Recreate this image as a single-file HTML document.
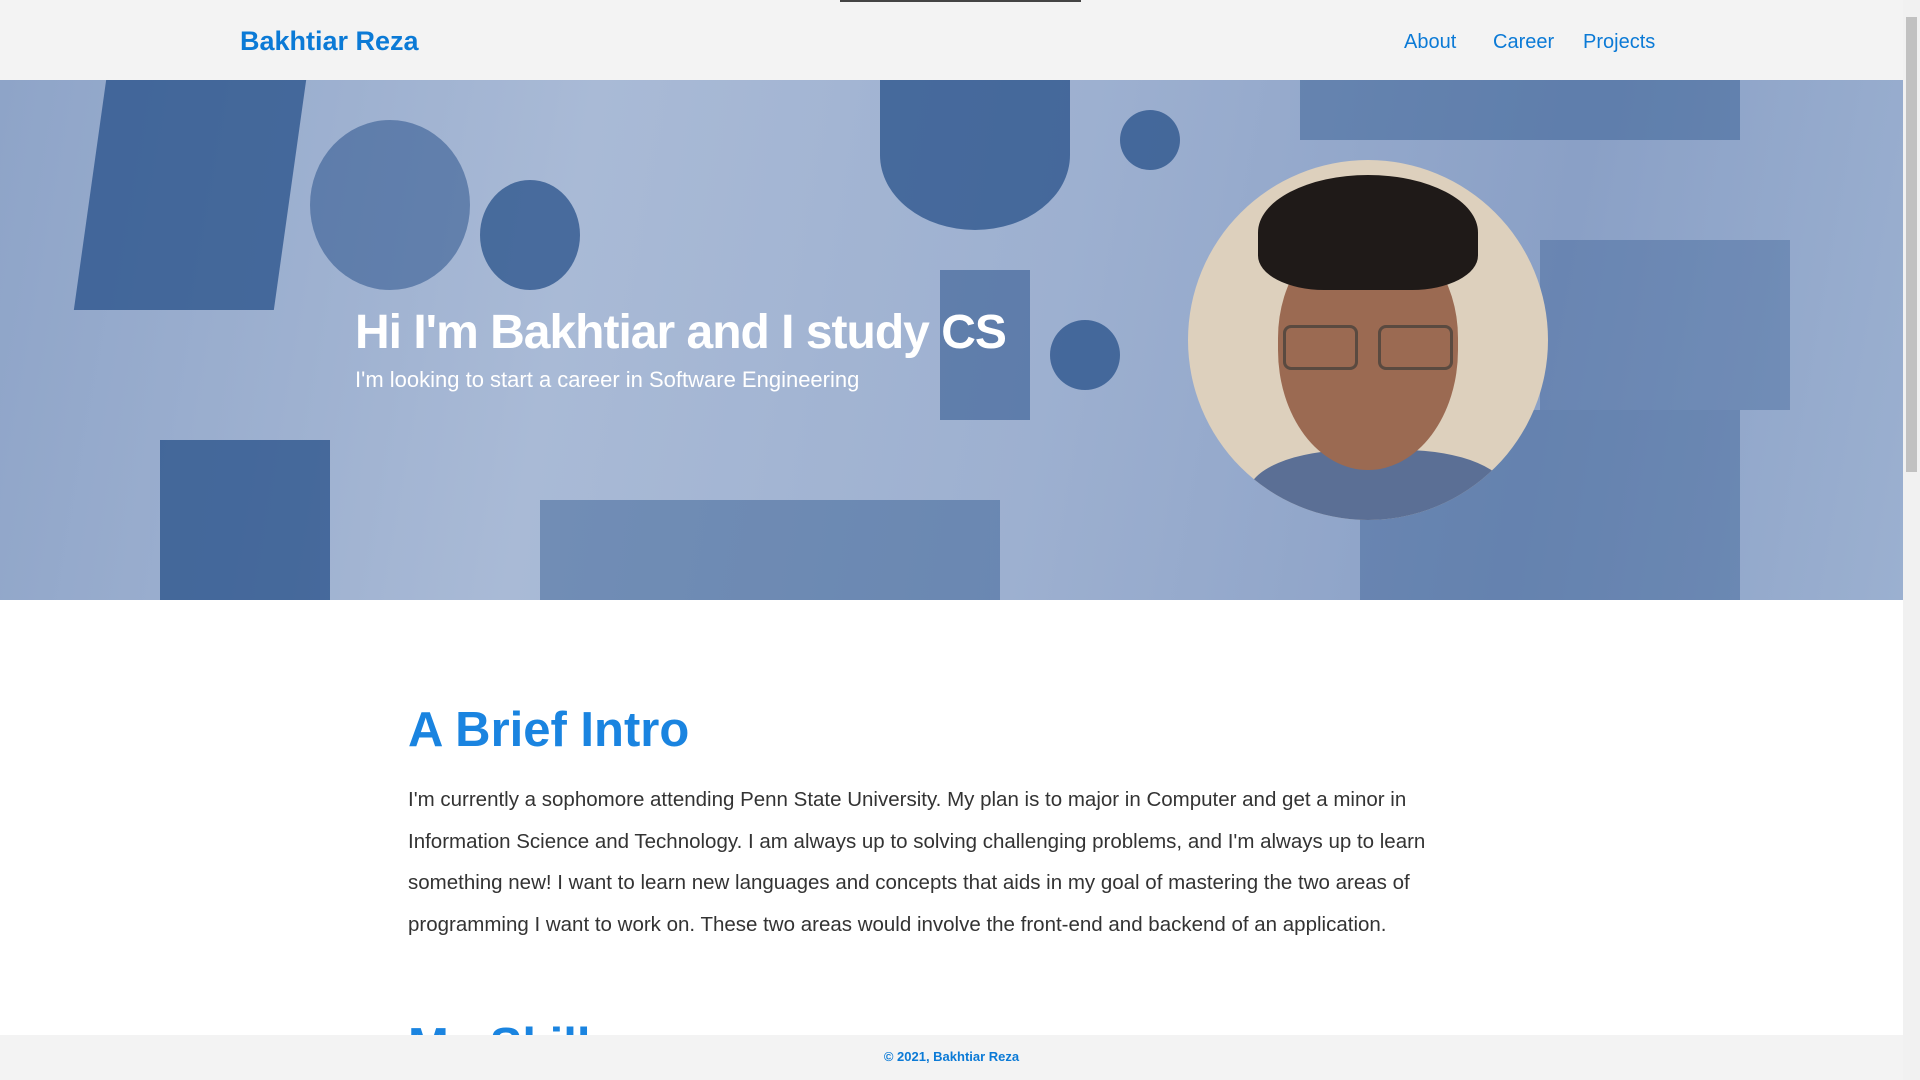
<!DOCTYPE html>
<html><head><meta charset="utf-8"><style>
*{margin:0;padding:0;box-sizing:border-box}
html,body{width:1920px;height:1080px;overflow:hidden;background:#fff;font-family:"Liberation Sans",sans-serif}
.nav{position:absolute;left:0;top:0;width:1903px;height:80px;background:#f3f3f3}
.brand{position:absolute;left:240px;top:26px;font-size:27px;font-weight:bold;color:#0b7ad6}
.links{position:absolute;top:31px;font-size:20px;color:#0b7ad6}
.topline{position:absolute;left:840px;top:0;width:241px;height:2px;background:#444}
.hero{position:absolute;left:0;top:80px;width:1903px;height:520px;overflow:hidden;
background:linear-gradient(100deg,#8ea4c8 0%,#a9bad6 30%,#9db0d0 55%,#8aa0c6 80%,#9bb0d0 100%)}
.b{position:absolute;background:#1f4a85;opacity:.7}
.hero h1{position:absolute;left:355px;top:225px;font-size:48px;color:#fff;font-weight:bold;letter-spacing:-1px}
.hero p{position:absolute;left:355px;top:287px;font-size:22px;color:#fff}
.photo{position:absolute;left:1188px;top:80px;width:360px;height:360px;border-radius:50%;overflow:hidden;background:#ddd0bd}
h2{position:absolute;left:408px;top:702px;font-size:49px;color:#1a84e0;font-weight:bold}
.para{position:absolute;left:408px;top:779px;width:1040px;font-size:20.5px;line-height:41.6px;color:#333}
.sk{position:absolute;left:408px;top:1018px;font-size:49px;color:#1a84e0;font-weight:bold}
.foot{position:absolute;left:0;top:1035px;width:1903px;height:45px;background:#f3f3f3;text-align:center;font-size:13px;font-weight:bold;color:#0b7ad6;padding-top:14px}
.sb{position:absolute;left:1903px;top:0;width:17px;height:1080px;background:#f1f1f1}
.sb div{position:absolute;left:3px;top:17px;width:11px;height:455px;background:#c1c1c1}
</style></head><body>
<div class="nav"><div class="brand">Bakhtiar Reza</div>
<div class="links" style="left:1404px">About</div>
<div class="links" style="left:1493px">Career</div>
<div class="links" style="left:1583px">Projects</div></div>
<div class="topline"></div>
<div class="hero">
<div class="b" style="left:90px;top:0;width:200px;height:230px;transform:skewX(-8deg)"></div>
<div class="b" style="left:310px;top:40px;width:160px;height:170px;border-radius:50%;opacity:.5"></div>
<div class="b" style="left:480px;top:100px;width:100px;height:110px;border-radius:50%"></div>
<div class="b" style="left:880px;top:0;width:190px;height:150px;border-radius:0 0 50% 50%"></div>
<div class="b" style="left:1120px;top:30px;width:60px;height:60px;border-radius:50%"></div>
<div class="b" style="left:1300px;top:0;width:440px;height:60px;opacity:.4"></div>
<div class="b" style="left:940px;top:190px;width:90px;height:150px;opacity:.5"></div>
<div class="b" style="left:1050px;top:240px;width:70px;height:70px;border-radius:50%"></div>
<div class="b" style="left:160px;top:360px;width:170px;height:160px;opacity:.7"></div>
<div class="b" style="left:540px;top:420px;width:460px;height:100px;opacity:.4"></div>
<div class="b" style="left:1360px;top:330px;width:380px;height:190px;opacity:.35"></div>
<div class="b" style="left:1540px;top:160px;width:250px;height:170px;opacity:.3"></div>
<h1>Hi I'm Bakhtiar and I study CS</h1>
<p>I'm looking to start a career in Software Engineering</p>
<div class="photo">
<div style="position:absolute;left:60px;top:290px;width:260px;height:110px;background:#5b6f95;border-radius:40% 40% 0 0"></div>
<div style="position:absolute;left:90px;top:70px;width:180px;height:240px;background:#9b6a52;border-radius:45% 45% 50% 50%"></div>
<div style="position:absolute;left:70px;top:15px;width:220px;height:115px;background:#1f1a18;border-radius:50% 50% 30% 30%"></div>
<div style="position:absolute;left:95px;top:165px;width:75px;height:45px;border:3px solid #5a4a40;border-radius:8px"></div>
<div style="position:absolute;left:190px;top:165px;width:75px;height:45px;border:3px solid #5a4a40;border-radius:8px"></div>
</div>
</div>
<h2>A Brief Intro</h2>
<div class="para">I'm currently a sophomore attending Penn State University. My plan is to major in Computer and get a minor in Information Science and Technology. I am always up to solving challenging problems, and I'm always up to learn something new! I want to learn new languages and concepts that aids in my goal of mastering the two areas of programming I want to work on. These two areas would involve the front-end and backend of an application.</div>
<div class="sk">My Skills</div>
<div class="foot">© 2021, Bakhtiar Reza</div>
<div class="sb"><div></div></div>
</body></html>
